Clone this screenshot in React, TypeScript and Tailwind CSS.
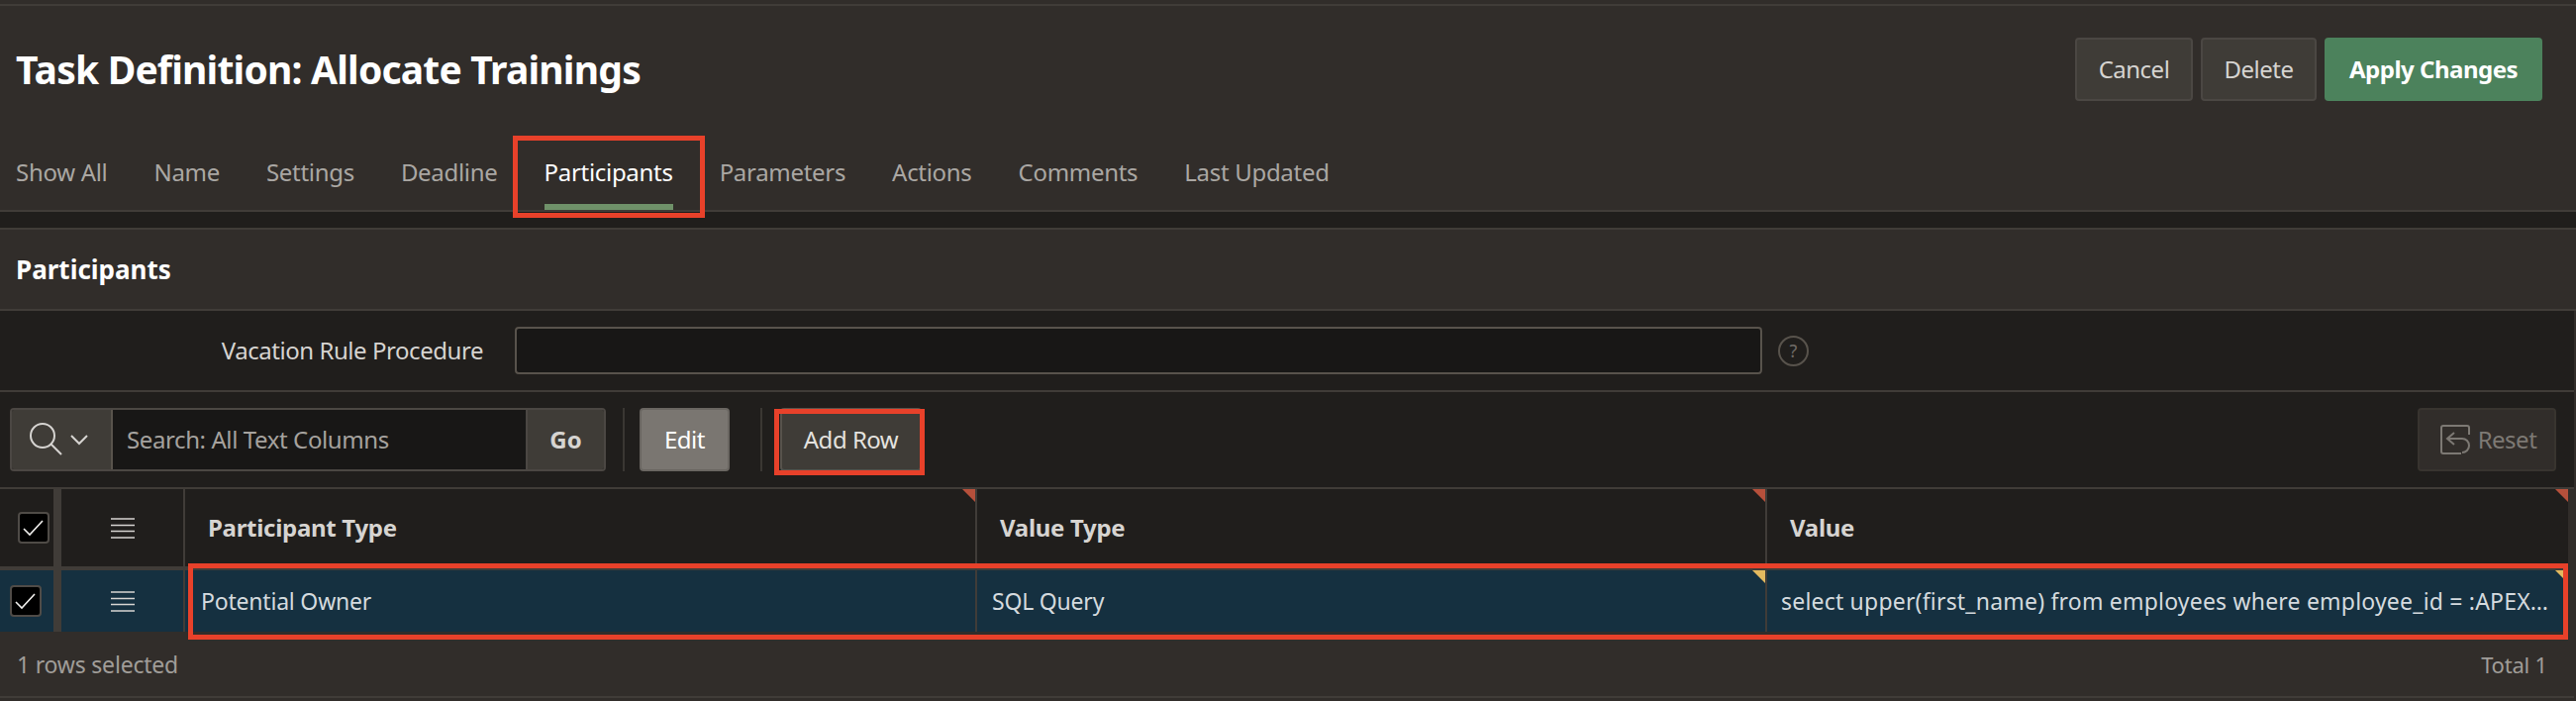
function Check({ left }: { left: string }) {
  return (
    <div className={`${left} w-[32px] h-[32px] rounded-[4px] bg-black border-2 border-[#4f4b47] flex items-center justify-center`}>
      <svg width="24" height="20" viewBox="0 0 24 20" fill="none" stroke="#f0efed" strokeWidth="1.6">
        <path d="M2 11 L8 17 L21 3" />
      </svg>
    </div>
  );
}

function Burger() {
  return (
    <svg width="24" height="21" viewBox="0 0 24 21" stroke="#d6d4d1" strokeWidth="1.5">
      <path d="M0 1h24M0 7.5h24M0 13.5h24M0 20h24" />
    </svg>
  );
}

function Corner({ color }: { color: string }) {
  return (
    <svg className="absolute top-0 right-0" width="13" height="13" viewBox="0 0 13 13">
      <path d="M0 0H13V13Z" fill={color} />
    </svg>
  );
}

const tabs = ["Show All", "Name", "Settings", "Deadline", "Participants", "Parameters", "Actions", "Comments", "Last Updated"];

export default function App() {
  return (
    <div className="relative w-[2602px] h-[708px] overflow-hidden bg-[#312d2a] font-['Noto_Sans','Open_Sans',sans-serif] text-[#d6d4d1]">
      <div className="h-[6px] border-b-2 border-[#403c38]" />

      <div className="h-[206px] flex flex-col">
        <div className="flex items-start justify-between pt-[32px] pr-[34px] pl-[16px] h-[120px]">
          <h1 className="text-[39px] leading-[64px] font-bold text-white tracking-[-0.8px]">Task Definition: Allocate Trainings</h1>
          <div className="flex gap-[8px]">
            <button className="w-[119px] h-[64px] rounded-[4px] border-2 border-[#4b4743] bg-[#3f3c37] text-[24px] tracking-[-0.5px] text-[#d6d4d1]">Cancel</button>
            <button className="w-[117px] h-[64px] rounded-[4px] border-2 border-[#4b4743] bg-[#3f3c37] text-[24px] tracking-[-0.5px] text-[#d6d4d1]">Delete</button>
            <button className="w-[220px] h-[64px] rounded-[4px] bg-[#4c825c] text-[24px] font-bold tracking-[-0.5px] text-white">Apply Changes</button>
          </div>
        </div>
        <div className="flex-1 flex gap-[47px] pl-[16px]">
          {tabs.map((t) => (
            <div
              key={t}
              className={`flex items-center h-[86px] pt-[16px] border-b-[6px] text-[24px] tracking-[-0.3px] ${t === "Participants" ? "border-[#6f9169] text-white" : "border-transparent text-[#aaa7a3]"}`}
            >
              {t}
            </div>
          ))}
        </div>
      </div>

      <div className="h-[20px] bg-[#201e1c] border-y-2 border-[#403c38]" />

      <div className="h-[82px] flex items-center pl-[16px] border-b-2 border-[#403c38] text-[26px] font-bold text-white">Participants</div>

      <div className="h-[82px] mr-[2px] bg-[#201e1c] border-b-2 border-[#403c38] flex items-center">
        <label className="w-[488px] text-right text-[24px] tracking-[-0.45px] text-[#d6d4d1]">Vacation Rule Procedure</label>
        <div className="ml-[32px] w-[1260px] h-[48px] bg-[#181716] border-2 border-[#58534c] rounded-[4px]" />
        <div className="ml-[16px] w-[31px] h-[31px] rounded-full border-2 border-[#58534c] flex items-center justify-center text-[18px] text-[#6f6b66]">?</div>
      </div>

      <div className="h-[98px] mr-[2px] bg-[#201e1c] border-b-2 border-[#403c38] flex items-center pl-[10px] pr-[18px]">
        <div className="flex w-[602px] h-[64px] rounded-[4px] border-2 border-[#4b4743] overflow-hidden">
          <div className="w-[102px] bg-[#3f3c37] border-r-2 border-[#58534c] flex items-center pl-[18px] gap-[6px]">
            <svg width="34" height="34" viewBox="0 0 34 34" fill="none" stroke="#d6d4d1" strokeWidth="2">
              <circle cx="13" cy="13" r="12" />
              <path d="M21 21 L32 32" />
            </svg>
            <svg width="20" height="12" viewBox="0 0 20 12" fill="none" stroke="#d6d4d1" strokeWidth="2">
              <path d="M2 2 L10 10 L18 2" />
            </svg>
          </div>
          <div className="flex-1 bg-[#181716] flex items-center pl-[14px] text-[24px] tracking-[-0.4px] text-[#a5a29e]">Search: All Text Columns</div>
          <div className="w-[79px] bg-[#3f3c37] border-l-2 border-[#4b4743] flex items-center justify-center text-[24px] font-bold text-[#d6d4d1]">Go</div>
        </div>
        <div className="ml-[17px] w-[2px] h-[64px] bg-[#3a3733]" />
        <button className="ml-[15px] w-[91px] h-[64px] rounded-[4px] border-2 border-[#6a6661] bg-[#7a7671] text-[24px] tracking-[-0.5px] text-white">Edit</button>
        <div className="ml-[31px] w-[2px] h-[64px] bg-[#3a3733]" />
        <button className="ml-[18px] w-[143px] h-[64px] rounded-[4px] border-2 border-[#58534c] bg-[#3f3c37] text-[24px] tracking-[-0.5px] text-[#e4e2df]">Add Row</button>
        <button className="ml-auto w-[140px] h-[64px] rounded-[4px] border-2 border-[#38342f] bg-[#312d2a] flex items-center justify-center gap-[8px] pl-[3px] text-[24px] tracking-[-0.5px] text-[#7d7974]">
          <svg width="30" height="30" viewBox="0 0 30 30" fill="none" stroke="#7d7974" strokeWidth="2">
            <path d="M29 10 V3 a2 2 0 0 0 -2 -2 H3 a2 2 0 0 0 -2 2 V27 a2 2 0 0 0 2 2 H21" />
            <path d="M14 8 L7 14 L14 20 M7 14 H22 a6 6 0 0 1 0 14" />
          </svg>
          Reset
        </button>
      </div>

      <div className="mr-[8px] grid grid-cols-[54px_8px_123px_2px_798px_2px_796px_2px_1fr] bg-[#4b4743]">
        <div className="h-[78px] bg-[#201e1c] flex items-center"><Check left="ml-[18px]" /></div>
        <div className="bg-[#403c38]" />
        <div className="bg-[#201e1c] flex items-center justify-center"><Burger /></div>
        <div className="bg-[#403c38]" />
        <div className="relative bg-[#201e1c] flex items-center pl-[23px] text-[24px] font-bold tracking-[-0.3px]">Participant Type<Corner color="#b6503b" /></div>
        <div className="bg-[#403c38]" />
        <div className="relative bg-[#201e1c] flex items-center pl-[23px] text-[24px] font-bold tracking-[-0.3px]">Value Type<Corner color="#b6503b" /></div>
        <div className="bg-[#403c38]" />
        <div className="relative bg-[#201e1c] flex items-center pl-[23px] text-[24px] font-bold tracking-[-0.3px]">Value<Corner color="#b6503b" /></div>

        <div className="col-span-9 h-[4px] bg-[#403c38]" />

        <div className="h-[62px] bg-[#153040] flex items-center"><Check left="ml-[10px]" /></div>
        <div className="bg-[#403c38]" />
        <div className="bg-[#153040] flex items-center justify-center"><Burger /></div>
        <div className="bg-[#403c38]" />
        <div className="bg-[#153040] flex items-center pl-[16px] text-[23px] tracking-[-0.2px] text-[#d4dade]">Potential Owner</div>
        <div className="bg-[#403c38]" />
        <div className="relative bg-[#153040] flex items-center pl-[15px] text-[23px] tracking-[-0.2px] text-[#d4dade]">SQL Query<Corner color="#e3b95f" /></div>
        <div className="bg-[#403c38]" />
        <div className="relative bg-[#153040] flex items-center pl-[14px] text-[23px] tracking-[0.2px] text-[#d4dade] min-w-0 whitespace-nowrap">
          select upper(first_name) from employees where employee_id = :APEX…
          <Corner color="#e3b95f" />
        </div>
      </div>

      <div className="h-[65px] mt-[2px] mr-[2px] flex items-center justify-between pl-[17px] pr-[27px] text-[23px] tracking-[-0.2px] text-[#a09d99] border-b-2 border-[#403c38]">
        <span>1 rows selected</span>
        <span className="text-[22px]">Total 1</span>
      </div>

      <div className="absolute left-[518px] top-[137px] w-[194px] h-[83px] border-[5px] border-[#e8412a]" />
      <div className="absolute left-[782px] top-[413px] w-[152px] h-[67px] border-[5px] border-[#e8412a]" />
      <div className="absolute left-[190px] top-[569px] w-[2404px] h-[77px] border-[5px] border-[#e8412a]" />
    </div>
  );
}
